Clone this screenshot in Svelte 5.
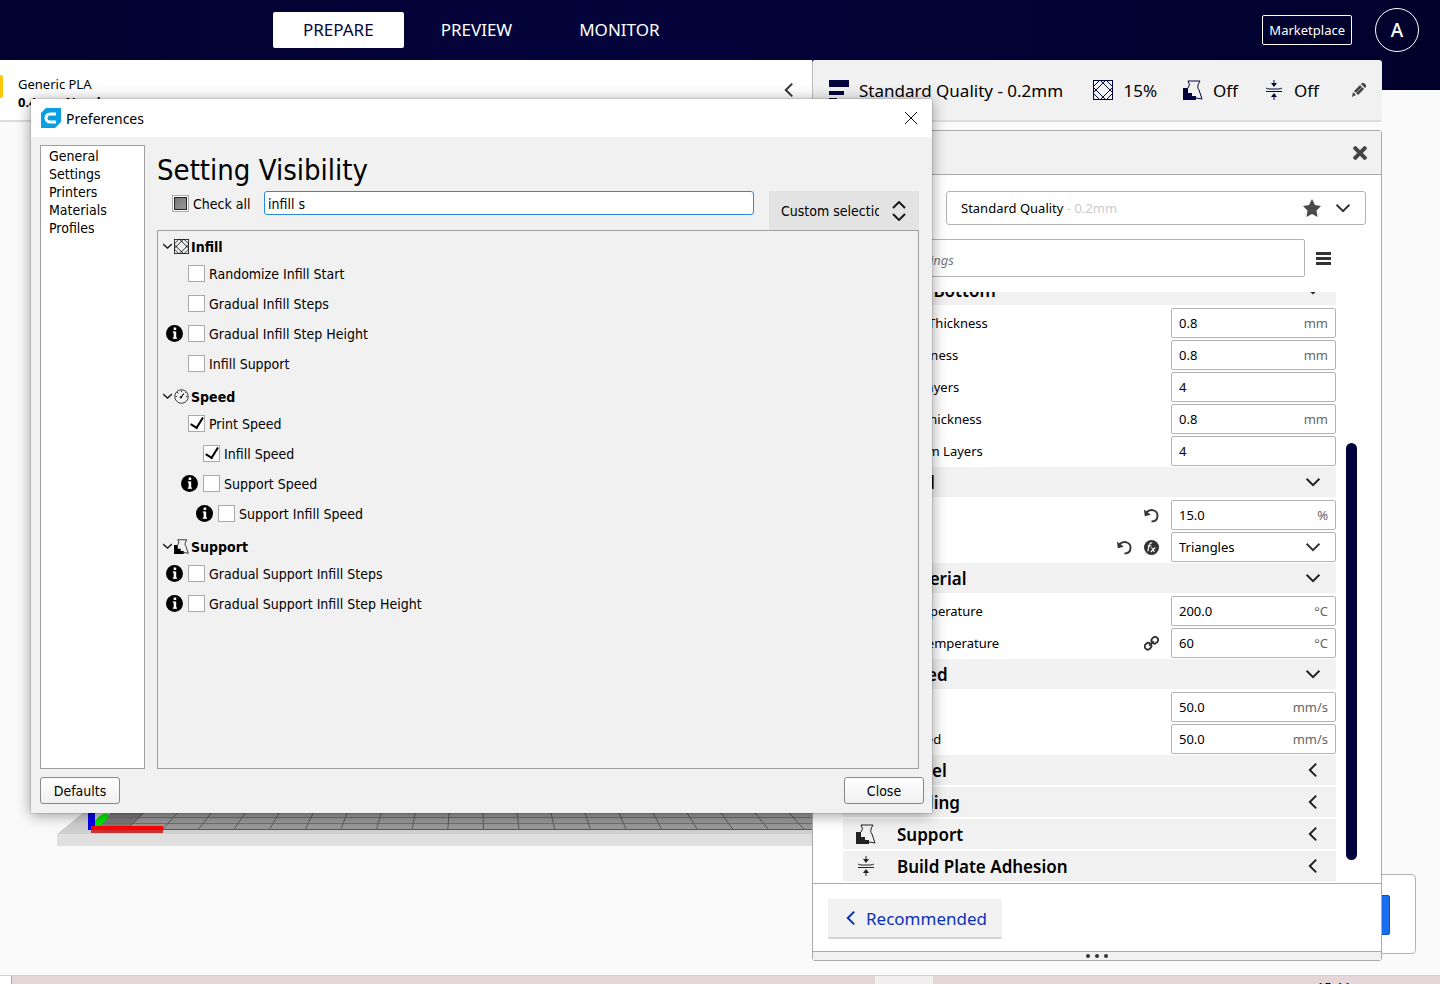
<script lang="ts">
    type Row = { name: string, depth?: number, value?: string, unit?: string, select?: boolean, icons?: string[] }
    type Section = { name: string, icon?: string, open?: boolean, rows: Row[] }
    type Item = { name: string, depth?: number, checked?: boolean, info?: boolean }

    const tabs = ["PREPARE", "PREVIEW", "MONITOR"];
    let activeTab = $state("PREPARE");

    const pages = ["General", "Settings", "Printers", "Materials", "Profiles"];

    const sections: Section[] = [
        { name: "Top/Bottom", open: true, rows: [
            { name: "Top/Bottom Thickness", value: "0.8", unit: "mm" },
            { name: "Top Thickness", depth: 1, value: "0.8", unit: "mm" },
            { name: "Top Layers", depth: 2, value: "4" },
            { name: "Bottom Thickness", depth: 1, value: "0.8", unit: "mm" },
            { name: "Bottom Layers", depth: 2, value: "4" },
        ]},
        { name: "Infill", icon: "infill", open: true, rows: [
            { name: "Infill Density", value: "15.0", unit: "%", icons: ["reset"] },
            { name: "Infill Pattern", value: "Triangles", select: true, icons: ["reset", "fx"] },
        ]},
        { name: "Material", open: true, rows: [
            { name: "Printing Temperature", value: "200.0", unit: "°C" },
            { name: "Build Plate Temperature", value: "60", unit: "°C", icons: ["link"] },
        ]},
        { name: "Speed", icon: "speed", open: true, rows: [
            { name: "Print Speed", value: "50.0", unit: "mm/s" },
            { name: "Infill Speed", depth: 1, value: "50.0", unit: "mm/s" },
        ]},
        { name: "Travel", rows: [] },
        { name: "Cooling", rows: [] },
        { name: "Support", icon: "support", rows: [] },
        { name: "Build Plate Adhesion", icon: "adhesion", rows: [] },
    ];

    const tree: { name: string, icon: string, items: Item[] }[] = [
        { name: "Infill", icon: "infill", items: [
            { name: "Randomize Infill Start" },
            { name: "Gradual Infill Steps" },
            { name: "Gradual Infill Step Height", info: true },
            { name: "Infill Support" },
        ]},
        { name: "Speed", icon: "speed", items: [
            { name: "Print Speed", checked: true },
            { name: "Infill Speed", depth: 1, checked: true },
            { name: "Support Speed", depth: 1, info: true },
            { name: "Support Infill Speed", depth: 2, info: true },
        ]},
        { name: "Support", icon: "support", items: [
            { name: "Gradual Support Infill Steps", info: true },
            { name: "Gradual Support Infill Step Height", info: true },
        ]},
    ];

    const gridLines = Array.from({ length: 20 }, (_, i) => i - 1);
    let filter = $state("infill s");
</script>

{#snippet icon(name: string, size: number)}
    <svg class="icon" width={size} height={size} viewBox="0 0 20 20" fill="none" stroke="currentColor" aria-hidden="true">
        {#if name === "infill"}
            <rect x="0.5" y="0.5" width="19" height="19" />
            <path d="M0 7 7 0M0 13 13 0M7 20 20 7M13 20 20 13M13 0 20 7M7 0 20 13M0 7 13 20M0 13 7 20" />
            <circle cx="10" cy="10" r="6" fill="#f1f1f1" stroke="none" />
            <path d="M10 3 17 10 10 17 3 10Z" />
        {:else if name === "speed"}
            <circle cx="10" cy="10" r="9" />
            <path d="M10 2v2M4 4l2 2M16 4l-1 1M2 10h2M16 10h2" />
            <path d="m9 12 4-6" stroke-width="1.5" />
            <circle cx="9" cy="11" r="1.5" fill="currentColor" stroke="none" />
        {:else if name === "support"}
            <path d="M0 8h5v5h4v3h4v4H0z" fill="currentColor" stroke="none" />
            <path d="M5 1h12q-4 6-1 9l3 9-6-1M5 1q3 4 0 7" />
        {:else if name === "adhesion"}
            <path d="M2 8q1 1 4 1h8q3 0 4-1M2 11.500h16M10 0v3M10 17v3" />
            <path d="M7 3h6l-3 4zM7 17h6l-3-4z" fill="currentColor" stroke="none" />
        {:else if name === "reset"}
            <path d="M3 6c6-6 15-3 15 4 0 5-3 8-8 8" stroke-width="2.500" />
            <path d="M0 2 1 11 9 9z" fill="currentColor" stroke="none" />
        {:else if name === "fx"}
            <circle cx="10" cy="10" r="10" fill="currentColor" stroke="none" />
            <path d="M11 4q-3-1-4 3l-2 8M5 8h5M10 10l4 6M15 10l-6 6" stroke="#fff" stroke-width="1.500" />
        {:else if name === "link"}
            <rect x="1" y="10" width="9" height="8" rx="4" transform="rotate(-45 5 14)" stroke-width="2.500" />
            <rect x="10" y="2" width="9" height="8" rx="4" transform="rotate(-45 14 6)" stroke-width="2.500" />
            <path d="m7 13 6-6" stroke-width="2.500" />
        {:else if name === "info"}
            <circle cx="10" cy="10" r="10" fill="currentColor" stroke="none" />
            <path d="M8 8.500h2M8 15.500h5" stroke="#fff" stroke-width="1.500" />
            <path d="M10.500 7.500v8M10.500 3v3" stroke="#fff" stroke-width="3" />
        {:else if name === "down"}
            <path d="m2 6 8 8 8-8" stroke-width="2.500" />
        {:else if name === "left"}
            <path d="m14 2-8 8 8 8" stroke-width="2.500" />
        {/if}
    </svg>
{/snippet}

<div class="app">
    <header>
        <nav>
            {#each tabs as tab}
                <button class:active={tab === activeTab} onclick={() => activeTab = tab}>{tab}</button>
            {/each}
        </nav>
        <a class="marketplace" href="#marketplace">Marketplace</a>
        <button class="account" aria-label="Account">A</button>
    </header>

    <main>
        <div class="view">
            <div class="material-bar">
                <span class="spool"></span>
                <div class="material">
                    <span>Generic PLA</span>
                    <b>0.4mm Nozzle</b>
                </div>
                <button class="plain" aria-label="Collapse">{@render icon("left", 16)}</button>
            </div>
            <svg class="plate" width="1000" height="34" viewBox="57 812 1000 34" aria-hidden="true">
                <path d="M57 834 84 812H1057V834Z" fill="#cfcfcf" />
                <path d="M57 834H1057V846H57Z" fill="#dfdfdf" />
                <path d="M92 829 112 812H1057V829Z" fill="#999" />
                <path d="M92 829 112 812H146L127 829Z" fill="#7c7c7c" />
                <path d="M106 817.500H1057M99 823.500H1057" stroke="#707070" />
                {#each gridLines as i}
                    <path d="M{163 + 35.6 * i} 829 {178 + 33.9 * i} 812" stroke="#5c5c5c" />
                {/each}
                <path d="M163 829.500H1057" stroke="#2a5cc0" />
                <ellipse cx="101" cy="820" rx="9" ry="4" transform="rotate(-40 101 820)" fill="#00e800" />
                <path d="M88 812h7v18h-7z" fill="#00e" />
                <path d="M91 826h72v4H91z" fill="#f00" />
                <path d="M91 830h72v3H91z" fill="#c83232" />
            </svg>
        </div>

        <div class="job"><button aria-label="Slice"></button></div>

        <aside>
            <button class="summary">
                <svg width="20" height="20" viewBox="0 0 20 20" fill="currentColor" aria-hidden="true"><path d="M0 0h20v7H0zM0 11h15v4H0zM0 18h8v2H0z" /></svg>
                <span class="quality">Standard Quality - 0.2mm</span>
                {@render icon("infill", 20)}<span>15%</span>
                {@render icon("support", 20)}<span>Off</span>
                {@render icon("adhesion", 20)}<span>Off</span>
                <svg class="pencil" width="14" height="14" viewBox="0 0 14 14" fill="#444" aria-hidden="true"><path d="M0 14 1 9 4 12zM2 8l6-6 4 4-6 6zM9 1l1-1h2l2 2v2l-1 1z" /><path d="m4 10 6-6" stroke="#999" /></svg>
            </button>

            <section class="panel">
                <div class="panel-head">
                    <button class="plain" aria-label="Close settings">
                        <svg width="14" height="14" viewBox="0 0 14 14" stroke="#444" stroke-width="4" aria-hidden="true"><path d="m1 1 12 12M13 1 1 13" /></svg>
                    </button>
                </div>
                <div class="profile-row">
                    <span>Profile</span>
                    <button class="profile">
                        <span>Standard Quality <i>- 0.2mm</i></span>
                        <svg width="18" height="18" viewBox="0 0 18 18" fill="#4a4a4a" aria-hidden="true"><path d="m9 0 3 6 6 1-4.500 4.500 1 6.500L9 15l-5.500 3 1-6.500L0 7l6-1z" /></svg>
                        {@render icon("down", 16)}
                    </button>
                </div>
                <div class="search-row">
                    <input type="text" placeholder="search settings" aria-label="Search settings" />
                    <button class="plain" aria-label="Visibility menu">
                        <svg width="15" height="13" viewBox="0 0 15 13" fill="#333" aria-hidden="true"><path d="M0 0h15v3H0zM0 5h15v3H0zM0 10h15v3H0z" /></svg>
                    </button>
                </div>
                <div class="settings">
                    <div class="list">
                        {#each sections as section}
                            <button class="section-head">
                                <span class="section-icon">{#if section.icon}{@render icon(section.icon, 20)}{/if}</span>
                                <span class="section-name">{section.name}</span>
                                {@render icon(section.open ? "down" : "left", 16)}
                            </button>
                            {#each section.rows as row}
                                <label class="setting">
                                    <span class="setting-name" style="padding-left: {(row.depth ?? 0) * 21}px">{row.name}</span>
                                    {#each row.icons ?? [] as name}{@render icon(name, 15)}{/each}
                                    <span class="field">
                                        {#if row.select}
                                            <select><option>{row.value}</option></select>
                                            {@render icon("down", 16)}
                                        {:else}
                                            <input type="text" value={row.value} />
                                            <span class="unit">{row.unit}</span>
                                        {/if}
                                    </span>
                                </label>
                            {/each}
                        {/each}
                    </div>
                    <div class="scroll"></div>
                </div>
                <div class="panel-foot">
                    <button class="recommended">{@render icon("left", 16)}<span>Recommended</span></button>
                </div>
                <div class="grip"><i></i><i></i><i></i></div>
            </section>
        </aside>
    </main>

    <footer><span class="corner"></span><span class="gap"></span><span class="clock">15:44</span></footer>

    <div class="dialog" role="dialog" aria-labelledby="dialog-title">
        <div class="title-bar">
            <svg width="20" height="20" viewBox="0 0 20 20" aria-hidden="true">
                <path d="M5 0H20V14L14 20H0V5Z" fill="#0a9fe0" />
                <path d="M15 6H9a4 4 0 0 0 0 8h6" fill="none" stroke="#fff" stroke-width="3" />
            </svg>
            <span id="dialog-title">Preferences</span>
            <button class="plain" aria-label="Close window">
                <svg width="12" height="12" viewBox="0 0 12 12" stroke="#111" aria-hidden="true"><path d="m0 0 12 12M12 0 0 12" /></svg>
            </button>
        </div>
        <div class="dialog-body">
            <ul class="pages">
                {#each pages as page}<li><a href="#{page}">{page}</a></li>{/each}
            </ul>
            <div class="page">
                <h1>Setting Visibility</h1>
                <div class="filter-row">
                    <label class="check-all"><input type="checkbox" class="partial" /><span>Check all</span></label>
                    <input class="filter" type="text" aria-label="Filter" bind:value={filter} />
                    <div class="preset">
                        <select aria-label="Visibility preset"><option>Custom selection</option></select>
                        <svg width="14" height="20" viewBox="0 0 14 20" fill="none" stroke="#1a1a1a" stroke-width="2" aria-hidden="true"><path d="m1 7 6-6 6 6M1 13l6 6 6-6" /></svg>
                    </div>
                </div>
                <div class="tree">
                    {#each tree as group}
                        <h2>
                            <svg width="9" height="6" viewBox="0 0 9 6" fill="none" stroke="#222" stroke-width="1.500" aria-hidden="true"><path d="m0 1 4.500 4L9 1" /></svg>
                            {@render icon(group.icon, 15)}
                            <span>{group.name}</span>
                        </h2>
                        {#each group.items as item}
                            <label class="item" style="margin-left: {(item.depth ?? 0) * 15}px">
                                <span class="info">{#if item.info}{@render icon("info", 17)}{/if}</span>
                                <input type="checkbox" checked={item.checked} />
                                <span class="item-name">{item.name}</span>
                            </label>
                        {/each}
                    {/each}
                </div>
            </div>
        </div>
        <div class="dialog-foot">
            <button>Defaults</button>
            <button>Close</button>
        </div>
    </div>
</div>

<style>
    :global(body) {
        margin: 0;
        background: #fafafa;
    }

    .app {
        position: relative;
        display: flex;
        flex-direction: column;
        min-height: 100vh;
        overflow: hidden;
        background: linear-gradient(to right, #02022f, #04043c 40%, #01012c) top / 100% 90px no-repeat, #fafafa;
        font: 13px/18px "Noto Sans", sans-serif;
        color: #000;
    }

    .app * {
        box-sizing: border-box;
    }

    button, input, select {
        font: inherit;
        color: inherit;
        margin: 0;
    }

    button {
        cursor: pointer;
    }

    .icon {
        flex: none;
    }

    .plain {
        display: flex;
        padding: 0;
        border: 0;
        background: none;
        color: #333;
    }

    header {
        display: flex;
        align-items: center;
        height: 60px;
        padding-right: 21px;
        color: #fff;
    }

    nav {
        display: flex;
        flex: 1;
        gap: 7px;
        padding-left: 273px;
    }

    nav button {
        height: 36px;
        padding: 0 30px;
        border: 0;
        border-radius: 2px;
        background: none;
        font-size: 17px;
    }

    nav button.active {
        background: #fff;
        color: #04043c;
    }

    .marketplace {
        padding: 5px 6px;
        border: 1px solid #fff;
        border-radius: 2px;
        color: #fff;
        text-decoration: none;
    }

    .account {
        width: 44px;
        height: 44px;
        margin-left: 23px;
        padding: 0;
        border: 1px solid #fff;
        border-radius: 50%;
        background: none;
        font-size: 19px;
        font-weight: 500;
    }

    main {
        position: relative;
        display: flex;
        flex: 1;
        padding-right: 58px;
    }

    .view {
        position: relative;
        flex: 1;
        min-width: 0;
    }

    .material-bar {
        display: flex;
        align-items: flex-start;
        height: 62px;
        padding: 15px 15px 0 0;
        border-bottom: 2px solid #ddd;
        background: #fff;
    }

    .material-bar .plain {
        margin-top: 7px;
    }

    .spool {
        width: 3px;
        height: 23px;
        margin-right: 15px;
        border-radius: 0 2px 2px 0;
        background: #ffc60a;
    }

    .material {
        display: flex;
        flex: 1;
        flex-direction: column;
    }

    .plate {
        position: absolute;
        top: 752px;
        left: 57px;
    }

    .job {
        position: absolute;
        right: 24px;
        bottom: 21px;
        width: 300px;
        padding: 20px 25px 18px;
        border: 1px solid #b4b4b4;
        border-radius: 4px;
        background: #fff;
    }

    .job button {
        display: block;
        width: 100%;
        height: 40px;
        border: 1px solid #0b4fc4;
        border-radius: 2px;
        background: #196ef0;
    }

    aside {
        position: relative;
        width: 570px;
    }

    .summary {
        display: flex;
        align-items: center;
        width: 100%;
        height: 62px;
        padding: 0 16px;
        border: 0;
        border-left: 1px solid #bbb;
        border-bottom: 2px solid #ddd;
        border-radius: 3px;
        background: #f1f1f1;
        color: #04043c;
        font-size: 17px;
        text-align: left;
    }

    .summary span {
        margin: 0 26px 0 10px;
        padding-top: 2px;
        color: #000;
    }

    .summary .quality {
        flex: 1;
    }

    .pencil {
        margin-left: 7px;
    }

    .panel {
        margin-top: 8px;
        border: 1px solid #aaa;
        border-radius: 3px;
        background: #fff;
    }

    .panel-head {
        display: flex;
        align-items: center;
        justify-content: flex-end;
        height: 44px;
        padding-right: 14px;
        border-bottom: 1px solid #aaa;
        background: #f1f1f1;
    }

    .profile-row {
        display: flex;
        align-items: center;
        padding: 16px 15px 14px 30px;
    }

    .profile-row > span {
        flex: 1;
    }

    .profile {
        display: flex;
        align-items: center;
        gap: 14px;
        width: 420px;
        height: 34px;
        padding: 0 14px;
        border: 1px solid #b4b4b4;
        border-radius: 3px;
        background: #fff;
        color: #333;
        text-align: left;
    }

    .profile span {
        flex: 1;
        color: #000;
    }

    .profile i {
        color: #ccc;
        font-style: normal;
    }

    .search-row {
        display: flex;
        align-items: center;
        gap: 11px;
        padding: 0 50px 15px 30px;
    }

    .search-row input {
        flex: 1;
        height: 38px;
        padding: 4px 24px 0;
        border: 1px solid #b4b4b4;
        border-radius: 2px;
    }

    .search-row input::placeholder {
        color: #777;
        font-style: italic;
    }

    .settings {
        display: flex;
        overflow: hidden;
        gap: 10px;
        padding: 0 24px 0 30px;
    }

    .list {
        flex: 1;
        margin-top: -17px;
    }

    .section-head {
        display: flex;
        align-items: center;
        width: 100%;
        height: 30px;
        margin-bottom: 2px;
        padding: 0 15px 0 13px;
        border: 0;
        background: #f1f1f1;
        color: #222;
        font-size: 17px;
        font-weight: 600;
        text-align: left;
    }

    .section-icon {
        display: flex;
        width: 41px;
    }

    .section-name {
        flex: 1;
        padding-top: 2px;
        color: #000;
    }

    .setting {
        display: flex;
        align-items: center;
        gap: 12px;
        height: 32px;
        padding-left: 9px;
        color: #333;
    }

    .setting-name {
        flex: 1;
        color: #000;
    }

    .field {
        display: flex;
        align-items: center;
        width: 165px;
        height: 30px;
        border: 1px solid #b4b4b4;
        border-radius: 2px;
    }

    .field input, .field select {
        flex: 1;
        width: 0;
        height: 28px;
        padding: 0 0 0 7px;
        appearance: none;
        border: 0;
        background: none;
        color: #000;
    }

    .field .icon {
        margin-right: 14px;
    }

    .unit {
        padding-right: 7px;
        color: #666;
    }

    .scroll {
        width: 11px;
        margin: 151px 0 23px;
        border-radius: 6px;
        background: #02023c;
    }

    .panel-foot {
        padding: 15px 15px 12px;
        border-top: 1px solid #aaa;
    }

    .recommended {
        display: flex;
        align-items: center;
        gap: 7px;
        height: 40px;
        padding: 0 15px;
        border: 0;
        border-bottom: 2px solid #d4d4d4;
        border-radius: 2px;
        background: #f1f1f1;
        color: #0a32b4;
        font-size: 17px;
    }

    .recommended span {
        padding-top: 2px;
    }

    .grip {
        display: flex;
        align-items: center;
        justify-content: center;
        gap: 5px;
        height: 9px;
        border-top: 1px solid #aaa;
        background: #f1f1f1;
    }

    .grip i {
        width: 4px;
        height: 4px;
        border-radius: 50%;
        background: #333;
    }

    footer {
        display: flex;
        height: 9px;
        overflow: hidden;
        border-top: 1px solid #d4cccd;
        background: #e5d6da;
    }

    .corner {
        width: 12px;
        margin-right: 863px;
        border-right: 1px solid #aaa;
        background: #fff;
    }

    .gap {
        width: 58px;
        background: #f1eef0;
    }

    .clock {
        margin: 2px 0 0 auto;
        padding-right: 90px;
    }

    .dialog {
        position: absolute;
        top: 99px;
        left: 31px;
        width: 901px;
        background: #f1f1f1;
        box-shadow: 0 2px 14px rgba(0, 0, 0, 0.4), 0 0 1px rgba(0, 0, 0, 0.6);
        font-family: "DejaVu Sans Condensed", "Noto Sans", sans-serif;
        font-size: 14px;
    }

    .title-bar {
        display: flex;
        align-items: center;
        gap: 5px;
        height: 38px;
        padding: 0 15px 0 10px;
        background: #fff;
        font-family: "Noto Sans", sans-serif;
    }

    .title-bar span {
        flex: 1;
        padding-top: 2px;
    }

    .dialog-body {
        display: flex;
        gap: 12px;
        padding: 8px 13px 8px 9px;
    }

    .pages {
        width: 105px;
        margin: 0;
        padding: 1px 8px;
        border: 1px solid #a0a0a0;
        background: #fff;
        list-style: none;
    }

    .pages a {
        color: #000;
        text-decoration: none;
    }

    .page {
        flex: 1;
    }

    h1 {
        margin: 0;
        padding-top: 6px;
        font-size: 29px;
        font-weight: 400;
        line-height: 38px;
    }

    .filter-row {
        display: flex;
        align-items: flex-start;
        margin-top: 2px;
    }

    .check-all {
        display: flex;
        align-items: center;
        gap: 4px;
        width: 107px;
        padding: 2px 0 0 15px;
    }

    .check-all span, .item-name, h2 span {
        padding-top: 2px;
    }

    .filter {
        flex: 1;
        height: 24px;
        margin-right: 15px;
        padding: 1px 3px 0;
        border: 1px solid #2a8ad4;
        border-radius: 3px;
        outline: 0;
        background: #fff;
    }

    .preset {
        display: flex;
        align-items: center;
        gap: 13px;
        width: 150px;
        height: 39px;
        padding: 0 13px 0 12px;
        background: #e3e3e3;
    }

    .preset select {
        flex: 1;
        width: 0;
        padding: 0;
        appearance: none;
        border: 0;
        background: none;
    }

    .tree {
        min-height: 539px;
        border: 1px solid #a0a0a0;
    }

    h2 {
        display: flex;
        align-items: center;
        gap: 2px;
        height: 24px;
        margin: 6px 0 0;
        padding-left: 5px;
        font-size: 14px;
        font-weight: 700;
    }

    h2:first-child {
        margin-top: 3px;
    }

    .item {
        display: flex;
        align-items: center;
        gap: 4px;
        height: 30px;
        padding-left: 8px;
    }

    .info {
        display: flex;
        width: 18px;
    }

    .dialog input[type="checkbox"] {
        display: grid;
        place-items: center;
        width: 17px;
        height: 17px;
        appearance: none;
        border: 1px solid #aaa;
        background: #fff;
    }

    .dialog input:checked::before {
        content: "";
        width: 6px;
        height: 11px;
        margin-top: -3px;
        border: solid #000;
        border-width: 0 2px 2px 0;
        transform: rotate(32deg);
    }

    .partial::before {
        content: "";
        width: 11px;
        height: 11px;
        border: 1px solid #222;
        background: linear-gradient(135deg, #777, #999);
    }

    .dialog-foot {
        display: flex;
        justify-content: space-between;
        padding: 0 8px 9px 9px;
    }

    .dialog-foot button {
        width: 80px;
        height: 27px;
        padding: 1px 0 0;
        border: 1px solid #888;
        border-radius: 3px;
        background: linear-gradient(#fff, #f0f0f0);
    }
</style>
